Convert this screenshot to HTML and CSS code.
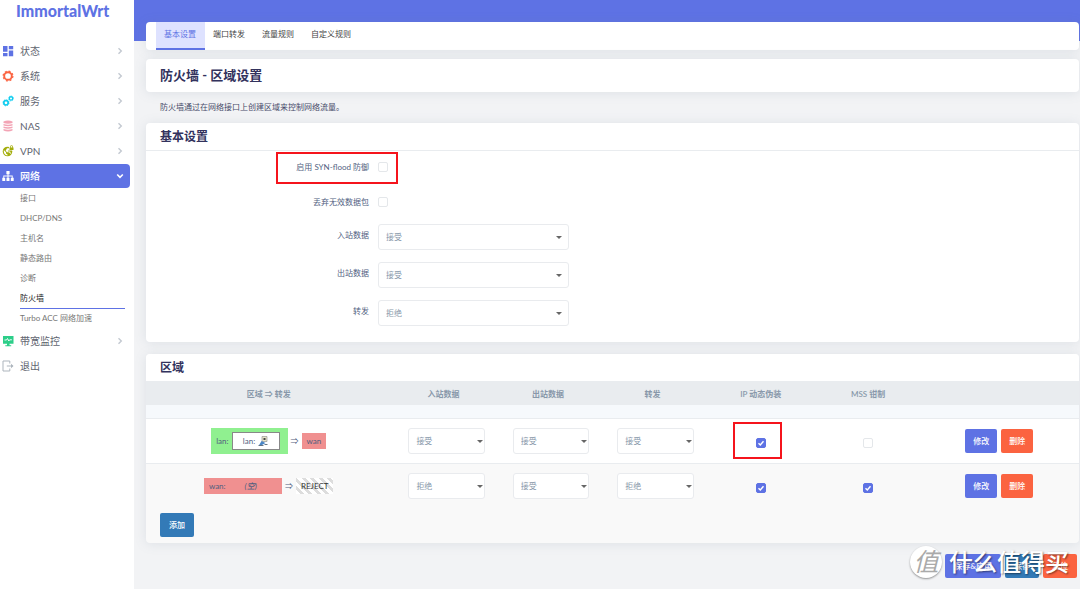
FILE: index.html
```html
<!DOCTYPE html>
<html lang="zh-CN">
<head>
<meta charset="utf-8">
<title>ImmortalWrt - 防火墙</title>
<link rel="stylesheet" href="styles.css">
</head>
<body>
<div class="layout">
  <aside class="sidebar">
    <a class="logo" href="#">ImmortalWrt</a>
    <nav class="menu">
      <a class="item" href="#"><svg class="icon" viewBox="0 0 12 12" fill="#5e72e4"><path d="M1 1h4.500v5.800H1zM1 8h4.500v3.200H1zM6.800 1h4.400v3.200H6.800zM6.800 5.400h4.400v5.800H6.800z"/></svg><span>状态</span><svg class="arrow" viewBox="0 0 6 8"><path d="M1.500 1.200 4.300 4 1.500 6.800"/></svg></a>
      <a class="item" href="#"><svg class="icon" viewBox="0 0 12 12" fill="none" stroke="#fb6340"><circle cx="6" cy="6" r="3.800" stroke-width="1.900"/><circle cx="6" cy="6" r="4.900" stroke-width="1.200" stroke-dasharray="2 1.850"/></svg><span>系统</span><svg class="arrow" viewBox="0 0 6 8"><path d="M1.500 1.200 4.300 4 1.500 6.800"/></svg></a>
      <a class="item" href="#"><svg class="icon" viewBox="0 0 12 12" fill="none" stroke="#11cdef"><circle cx="4" cy="7.800" r="2.200" stroke-width="1.700"/><circle cx="4" cy="7.800" r="3.100" stroke-width=".8" stroke-dasharray="1.200 1.240"/><circle cx="9" cy="3.400" r="1.700" stroke-width="1.400"/><circle cx="9" cy="3.400" r="2.500" stroke-width=".7" stroke-dasharray="1 .960"/></svg><span>服务</span><svg class="arrow" viewBox="0 0 6 8"><path d="M1.500 1.200 4.300 4 1.500 6.800"/></svg></a>
      <a class="item" href="#"><svg class="icon" viewBox="0 0 12 12" fill="#f3a4b5"><path d="M1.500 1.600Q6-.4 10.500 1.600V3Q6 4.600 1.500 3zM1.500 3.900Q6 5.500 10.500 3.900V5.500Q6 7.100 1.500 5.500zM1.500 6.400Q6 8 10.500 6.400V8Q6 9.600 1.500 8zM1.500 8.900Q6 10.500 10.500 8.900V10.600Q6 12.400 1.500 10.600z"/></svg><span>NAS</span><svg class="arrow" viewBox="0 0 6 8"><path d="M1.500 1.200 4.300 4 1.500 6.800"/></svg></a>
      <a class="item" href="#"><svg class="icon" viewBox="0 0 12 12"><circle cx="5.500" cy="6.500" r="4.800" fill="#a3ad0b"/><path d="M1.800 5 4 7.200v1.300l1.500 1v1C3 10.300 1.400 8.500 1.800 5zM5 3.300h2v1.800L5.600 6.400h2.500L9.300 9.200 8 8.300 7 7.300H5L3.700 5.800z" fill="#fff"/><path d="M7 0h5v5.500H7z" fill="#fff"/><path d="M7.500 2.500H8V1.800a1.500 1.500 0 0 1 3 0v.7h.5v2.600h-4zM8.700 2.500h1.600v-.7a.8.8 0 0 0-1.600 0z" fill="#a3ad0b" fill-rule="evenodd"/></svg><span>VPN</span><svg class="arrow" viewBox="0 0 6 8"><path d="M1.500 1.200 4.300 4 1.500 6.800"/></svg></a>
      <a class="item active" href="#"><svg class="icon" viewBox="0 0 12 12" fill="#fff"><path d="M4.400 1h3.200v3.200H6.500v1.300h4.200v2.300h1v3.100H8.800V7.800h1V6.400H6.500v1.400h1v3.100h-3V7.800h1V6.400H2.200v1.400h1v3.100H.3V7.800h1V5.500h4.200V4.200H4.400z"/></svg><span>网络</span><svg class="arrow open" viewBox="0 0 8 6"><path d="M1.200 1.500 4 4.300 6.800 1.500"/></svg></a>
      <div class="submenu">
        <a href="#">接口</a>
        <a href="#">DHCP/DNS</a>
        <a href="#">主机名</a>
        <a href="#">静态路由</a>
        <a href="#">诊断</a>
        <a class="current" href="#">防火墙</a>
        <a href="#">Turbo ACC 网络加速</a>
      </div>
      <a class="item" href="#"><svg class="icon" viewBox="0 0 12 12"><path d="M1 1h10.500v7.800H7.500v1.400h1.700v1H3.300v-1H5V8.800H1z" fill="#2dce89"/><path d="M2.500 5h2l1-1.500L6.800 6l.9-1.200h2.200" fill="none" stroke="#fff" stroke-width=".9"/></svg><span>带宽监控</span><svg class="arrow" viewBox="0 0 6 8"><path d="M1.500 1.200 4.300 4 1.500 6.800"/></svg></a>
      <a class="item" href="#"><svg class="icon" viewBox="0 0 12 12" fill="none" stroke="#adb5bd"><path d="M7.800 3.500V1H1v10h6.800V8.500M4.800 6h6"/><path d="m9 3.800 2.500 2.200L9 8.200z" fill="#adb5bd" stroke="none"/></svg><span>退出</span></a>
    </nav>
  </aside>

  <main class="main">
    <nav class="tabs">
      <a class="selected" href="#">基本设置</a>
      <a href="#">端口转发</a>
      <a href="#">流量规则</a>
      <a href="#">自定义规则</a>
    </nav>
    <h1 class="title">防火墙 - 区域设置</h1>
    <p class="description">防火墙通过在网络接口上创建区域来控制网络流量。</p>

    <section class="card">
      <h2>基本设置</h2>
      <div class="checks">
        <div class="row"><label for="syn">启用 SYN-flood 防御</label><input class="check" id="syn" type="checkbox"></div>
        <div class="row"><label for="invalid">丢弃无效数据包</label><input class="check" id="invalid" type="checkbox"></div>
        <div class="mark mark-syn"></div>
      </div>
      <div class="fields">
        <div class="row"><label for="input">入站数据</label><span class="select"><select id="input"><option>接受</option><option>拒绝</option></select></span></div>
        <div class="row"><label for="output">出站数据</label><span class="select"><select id="output"><option>接受</option><option>拒绝</option></select></span></div>
        <div class="row"><label for="forward">转发</label><span class="select"><select id="forward"><option>拒绝</option><option>接受</option></select></span></div>
      </div>
    </section>

    <section class="card zones">
      <h2>区域</h2>
      <table>
        <colgroup><col class="c-zone"><col class="c-policy"><col class="c-policy"><col class="c-policy"><col class="c-masq"><col class="c-mss"><col></colgroup>
        <thead>
          <tr><th>区域 ⇒ 转发</th><th>入站数据</th><th>出站数据</th><th>转发</th><th>IP 动态伪装</th><th>MSS 钳制</th><th></th></tr>
          <tr class="spacer"><td colspan="7"></td></tr>
        </thead>
        <tbody>
          <tr>
            <td><div class="flow"><span class="zone lan">lan: <span class="iface">lan: <svg viewBox="0 0 10 10"><path d="M4 .5h5v5H4z" fill="#e8e4c8" stroke="#888" stroke-width=".6"/><path d="M5.500 2h2v2h-2z" fill="#444"/><path d="M1 9.200 3.500 5l4 2-4 2.300z" fill="#4a86c5"/><path d="M.5 9.500h5M6.500 8.500h3" stroke="#567" stroke-width=".9"/></svg></span></span><span>⇒</span><span class="zone wan">wan</span></div></td>
            <td class="policy"><span class="select"><select aria-label="lan 入站数据"><option>接受</option></select></span></td>
            <td class="policy"><span class="select"><select aria-label="lan 出站数据"><option>接受</option></select></span></td>
            <td class="policy"><span class="select"><select aria-label="lan 转发"><option>接受</option></select></span></td>
            <td class="tick"><span class="marked"><input class="check" type="checkbox" aria-label="lan IP 动态伪装" checked><span class="mark mark-masq"></span></span></td>
            <td class="tick"><input class="check" type="checkbox" aria-label="lan MSS 钳制"></td>
            <td><div class="actions"><button class="btn primary">修改</button><button class="btn danger">删除</button></div></td>
          </tr>
          <tr>
            <td><div class="flow"><span class="zone wan empty">wan: <em>(空)</em></span><span>⇒</span><span class="zone reject">REJECT</span></div></td>
            <td class="policy"><span class="select"><select aria-label="wan 入站数据"><option>拒绝</option></select></span></td>
            <td class="policy"><span class="select"><select aria-label="wan 出站数据"><option>接受</option></select></span></td>
            <td class="policy"><span class="select"><select aria-label="wan 转发"><option>拒绝</option></select></span></td>
            <td class="tick"><input class="check" type="checkbox" aria-label="wan IP 动态伪装" checked></td>
            <td class="tick"><input class="check" type="checkbox" aria-label="wan MSS 钳制" checked></td>
            <td><div class="actions"><button class="btn primary">修改</button><button class="btn danger">删除</button></div></td>
          </tr>
        </tbody>
      </table>
      <div class="add"><button class="btn blue">添加</button></div>
    </section>

    <div class="page-actions">
      <button class="btn primary">保存&amp;应用</button>
      <button class="btn blue">保存</button>
      <button class="btn danger">复位</button>
    </div>
    <div class="watermark"><span class="seal">值</span><span class="brand">什么值得买</span></div>
  </main>
</div>
</body>
</html>
```

FILE: styles.css
```css
* { box-sizing: border-box; }
body {
  margin: 0;
  font: 8px/12px Lato, "Noto Sans CJK SC", sans-serif;
  color: #525f7f;
}
a { color: inherit; text-decoration: none; }
.layout { display: flex; min-height: 100vh; }

/* Sidebar */
.sidebar {
  position: relative;
  flex: 0 0 134px;
  background: #fff;
  box-shadow: 0 0 8px rgba(60, 70, 90, .5);
}
.logo {
  display: block;
  height: 38px;
  padding-left: 16px;
  font: 900 16px/22px Lato, sans-serif;
  color: #5e72e4;
}
.item {
  display: flex;
  align-items: center;
  height: 25px;
  margin-right: 4px;
  padding: 0 7px 0 2px;
  font-size: 10px;
  color: #5f6570;
}
.item.active {
  height: 24px;
  margin-top: 1px;
  padding-right: 6px;
  background: #5e72e4;
  border-radius: 0 4px 4px 0;
  color: #fff;
  font-weight: 500;
}
.icon { width: 12px; height: 12px; margin-right: 6px; }
.arrow {
  width: 6px;
  height: 8px;
  margin-left: auto;
  fill: none;
  stroke: #c3c9d1;
  stroke-width: 1.4;
}
.arrow.open { width: 8px; height: 6px; stroke: #fff; stroke-width: 1.6; }
.submenu { padding: 1px 9px 0 20px; color: #777; }
.submenu a { display: block; height: 20px; line-height: 19px; }
.submenu a:last-child { height: 19px; }
.submenu .current { border-bottom: 1px solid #5e72e4; color: #222; }

/* Content */
.main {
  position: relative;
  flex: 1;
  min-width: 0;
  padding: 22px 1px 11px 12px;
  background: linear-gradient(#5e72e4 41px, #f2f3f5 41px);
}
.tabs, .title, .card {
  background: #fff;
  border-radius: 4px;
  box-shadow: 0 1px 12px rgba(110, 125, 145, .15);
}
.tabs { display: flex; height: 28px; padding-left: 10px; color: #444; }
.tabs a { padding: 0 9px 0 8px; line-height: 25px; }
.tabs .selected {
  background: #dee2ff;
  border-bottom: 2px solid #5e72e4;
  color: #5e72e4;
}
.title {
  margin: 9px 0;
  padding: 0 14px;
  font-size: 13px;
  line-height: 33px;
  font-weight: 700;
  color: #32325d;
}
.description { margin: 0; padding: 0 14px; line-height: 13px; color: #484b6a; }
.card { margin-top: 9px; }
.card h2 {
  margin: 0;
  padding: 0 14px;
  border-bottom: 1px solid #e9ecef;
  font-size: 12px;
  line-height: 27px;
  font-weight: 700;
  color: #32325d;
}

/* Form */
.row { display: flex; gap: 9px; }
.row label { width: 223px; text-align: right; }
.checks { position: relative; }
.checks .row { align-items: center; height: 31px; margin-bottom: 4px; }
.fields { padding: 3px 0 16px; }
.fields .row { height: 26px; }
.fields .row + .row { margin-top: 12px; }
.fields label { padding-top: 5px; }
.fields .select { width: 191px; }
.select { position: relative; display: block; height: 26px; }
.select::after {
  content: "";
  position: absolute;
  top: 12px;
  right: 7px;
  border: 3px solid transparent;
  border-top-color: #666;
  border-bottom: 0;
}
select {
  appearance: none;
  width: 100%;
  height: 100%;
  padding: 0 7px;
  background: #fff;
  border: 1px solid #e9ebee;
  border-radius: 3px;
  font: inherit;
  color: #8898aa;
}
.check {
  appearance: none;
  display: block;
  width: 10px;
  height: 10px;
  margin: 0;
  background: #fff;
  border: 1px solid #e4e7ea;
  border-radius: 2px;
}
.check:checked {
  background: #5e72e4 url("data:image/svg+xml,%3Csvg xmlns='http://www.w3.org/2000/svg' viewBox='0 0 8 8'%3E%3Cpath d='M1.500 4.200 3.300 6 6.500 2.200' fill='none' stroke='white' stroke-width='1.400'/%3E%3C/svg%3E");
  border-color: #5e72e4;
}
.mark { position: absolute; border: 2px solid #f5141c; }
.mark-syn { left: 130px; top: 1px; width: 122px; height: 32px; }
.mark-masq { left: -23px; top: -16px; width: 49px; height: 37px; }

/* Zones */
.zones { margin-top: 12px; background: #f9f9f9; }
.zones h2 { background: #fff; border-radius: 4px 4px 0 0; }
table { width: 100%; table-layout: fixed; border-collapse: collapse; }
.c-zone { width: 26.3%; }
.c-policy { width: 11.2%; }
.c-masq { width: 12%; }
.c-mss { width: 11%; }
th, td { padding: 0; text-align: center; }
th { height: 23px; background: #e9ecef; color: #8898aa; font-weight: 600; }
.spacer td { height: 13px; background: #f6f9fc; }
tbody tr { height: 45px; border-top: 1px solid #e9ecef; background: #fff; }
tbody tr + tr { background: #f9f9f9; }
.flow { display: flex; justify-content: center; align-items: center; gap: 3px; }
.zone { display: flex; align-items: center; height: 16px; padding: 0 5px; }
.lan { height: 26px; padding-right: 8px; gap: 3px; background: #90f090; }
.iface {
  display: flex;
  justify-content: center;
  align-items: center;
  gap: 3px;
  width: 48px;
  height: 18px;
  background: #fff;
  border: 1px solid #888;
}
.iface svg { width: 10px; height: 10px; }
.wan { background: #f09090; }
.empty { width: 78px; gap: 19px; }
.empty em { font-weight: 500; }
.reject {
  color: #333;
  background: repeating-linear-gradient(45deg, #fff 0 3px, #ddd 3px 6px);
}
.policy { padding: 0 11px 0 17px; }
.policy .select::after { right: 2px; }
.tick { padding-top: 4px; }
.tick .check { margin: 0 auto; }
.marked { position: relative; display: block; width: 10px; margin: 0 auto; }
.actions { display: flex; justify-content: center; gap: 4px; }
.btn {
  height: 24px;
  padding: 0 8px;
  border: 0;
  border-radius: 2px;
  font: inherit;
  font-weight: 500;
  color: #fff;
}
.primary { background: #5e72e4; }
.danger { background: #fb6340; }
.blue { background: #337ab7; }
.add { padding: 5px 14px 6px; }
.add .btn { padding: 0 9px; }

.page-actions {
  display: flex;
  justify-content: flex-end;
  gap: 4px;
  padding: 11px 2px 0 0;
}
.page-actions .btn { padding: 0 9px; }
.watermark {
  position: absolute;
  right: 11px;
  bottom: 10px;
  display: flex;
  align-items: center;
  gap: 7px;
  line-height: 34px;
  color: #fff;
  text-shadow: 1px 1px 2px rgba(0, 0, 0, .5);
}
.seal {
  width: 32px;
  height: 32px;
  border-radius: 50%;
  background: #fff;
  box-shadow: 0 1px 2px rgba(0, 0, 0, .4);
  font-size: 25px;
  line-height: 31px;
  font-style: italic;
  text-align: center;
  text-shadow: none;
  color: #aaa;
}
.brand { font-size: 24px; font-weight: 500; }
```
